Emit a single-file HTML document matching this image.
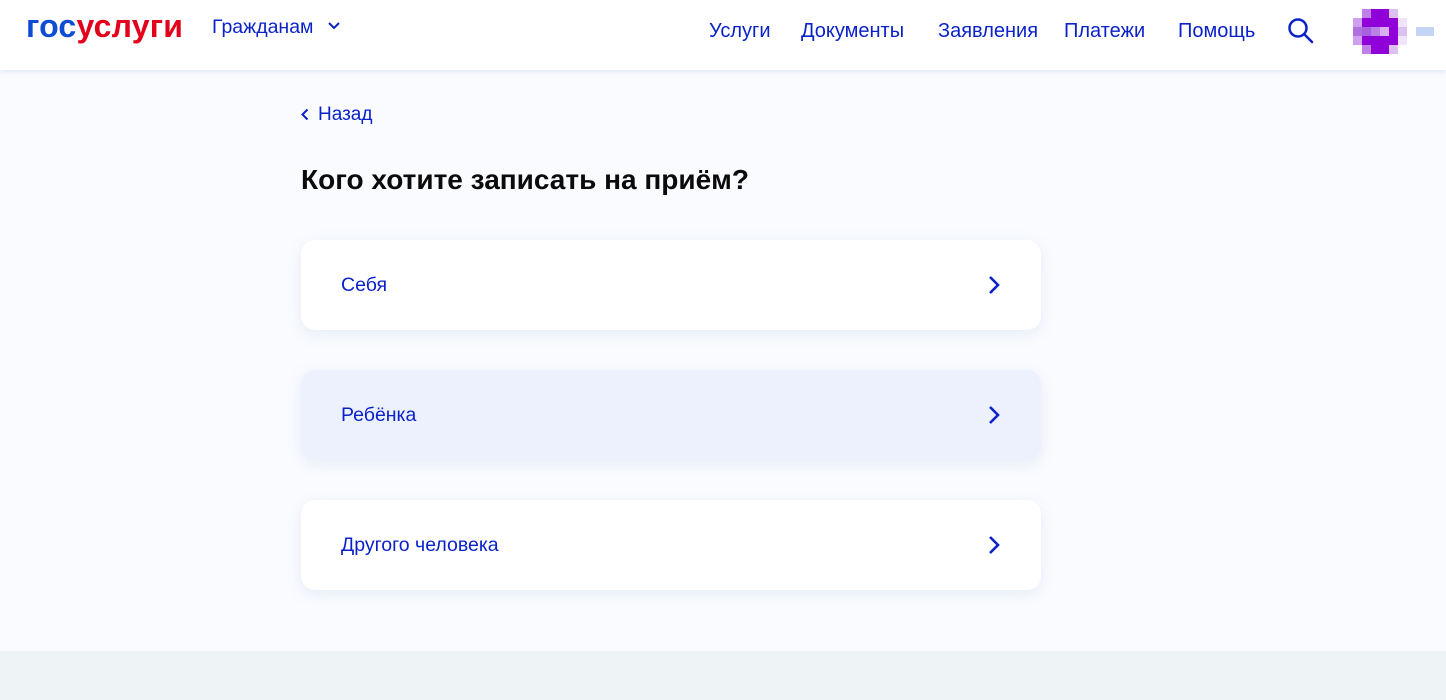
<!DOCTYPE html>
<html><head><meta charset="utf-8"><style>
*{margin:0;padding:0;box-sizing:border-box}
body{width:1446px;height:700px;overflow:hidden;background:#f9fbfe;font-family:"Liberation Sans",sans-serif;position:relative}
.hdr{position:absolute;left:0;top:0;width:1446px;height:70px;background:#fff;box-shadow:0 2px 4px rgba(200,210,235,.45)}
.logo{position:absolute;left:26px;top:8px;font-size:32px;font-weight:bold;letter-spacing:0.2px}
.logo .b{color:#0d4cd3}.logo .r{color:#e3001b}
.nav{position:absolute;top:20px;font-size:20px;color:#0b22c9}
.p{position:absolute;width:9px;height:9px}
.back{position:absolute;left:301px;top:104px;font-size:19px;color:#0b22c9}
h1{position:absolute;left:301px;top:164px;font-size:28px;font-weight:bold;color:#0b0b0b}
.card{position:absolute;left:301px;width:740px;height:90px;border-radius:14px;background:#fff;box-shadow:0 4px 14px rgba(210,220,240,.45)}
.card span{position:absolute;left:40px;top:34px;font-size:19.5px;color:#0b22c9}
.card svg{position:absolute;left:686px;top:35px}
.foot{position:absolute;left:0;top:651px;width:1446px;height:49px;background:#eef4f6}
</style></head><body>
<div class="hdr">
<div class="logo"><span class="b">гос</span><span class="r">услуги</span></div>
<div class="nav" style="left:212px;top:16px;font-size:19.5px">Гражданам</div>
<svg style="position:absolute;left:328px;top:21px" width="12" height="10" viewBox="0 0 12 10"><path d="M1 2l5 5 5-5" fill="none" stroke="#0b22c9" stroke-width="2"/></svg>
<div class="nav" style="left:709px">Услуги</div>
<div class="nav" style="left:801px">Документы</div>
<div class="nav" style="left:938px">Заявления</div>
<div class="nav" style="left:1064px">Платежи</div>
<div class="nav" style="left:1178px">Помощь</div>
<svg style="position:absolute;left:1287px;top:17px" width="30" height="28" viewBox="0 0 30 28"><circle cx="11" cy="11" r="8.5" fill="none" stroke="#0b22c9" stroke-width="2.5"/><path d="M17 17l8 8" stroke="#0b22c9" stroke-width="2.5" stroke-linecap="round"/></svg>
<div class="p" style="left:1362px;top:9px;background:#c080e8"></div><div class="p" style="left:1371px;top:9px;background:#9000d8"></div><div class="p" style="left:1380px;top:9px;background:#9000d8"></div><div class="p" style="left:1389px;top:9px;background:#dcc0f2"></div>
<div class="p" style="left:1353px;top:18px;background:#d0a0f0"></div><div class="p" style="left:1362px;top:18px;background:#9000d8"></div><div class="p" style="left:1371px;top:18px;background:#9000d8"></div><div class="p" style="left:1380px;top:18px;background:#9000d8"></div><div class="p" style="left:1389px;top:18px;background:#9000d8"></div><div class="p" style="left:1398px;top:18px;background:#f0e4fa"></div>
<div class="p" style="left:1353px;top:27px;background:#b070e0"></div><div class="p" style="left:1362px;top:27px;background:#a860e0"></div><div class="p" style="left:1371px;top:27px;background:#b880e8"></div><div class="p" style="left:1380px;top:27px;background:#d8b0f0"></div><div class="p" style="left:1389px;top:27px;background:#9000d8"></div><div class="p" style="left:1398px;top:27px;background:#dcc0f2"></div>
<div class="p" style="left:1353px;top:36px;background:#d0a0f0"></div><div class="p" style="left:1362px;top:36px;background:#9000d8"></div><div class="p" style="left:1371px;top:36px;background:#9000d8"></div><div class="p" style="left:1380px;top:36px;background:#9000d8"></div><div class="p" style="left:1389px;top:36px;background:#9000d8"></div><div class="p" style="left:1398px;top:36px;background:#f0e4fa"></div>
<div class="p" style="left:1362px;top:45px;background:#c080e8"></div><div class="p" style="left:1371px;top:45px;background:#9000d8"></div><div class="p" style="left:1380px;top:45px;background:#9000d8"></div><div class="p" style="left:1389px;top:45px;background:#dcc0f2"></div>
<div style="position:absolute;left:1416px;top:27px;width:18px;height:9px;background:#c4d4f4"></div>
</div>
<svg style="position:absolute;left:301px;top:108px" width="8" height="13" viewBox="0 0 8 13"><path d="M6.5 1.5l-5 5 5 5" fill="none" stroke="#0b22c9" stroke-width="2"/></svg>
<div class="back" style="left:318px">Назад</div>
<h1>Кого хотите записать на приём?</h1>
<div class="card" style="top:240px"><span>Себя</span><svg width="14" height="20" viewBox="0 0 14 20"><path d="M3 2l8 8-8 8" fill="none" stroke="#0b22c9" stroke-width="2.6"/></svg></div>
<div class="card" style="top:370px;background:#ecf1fd"><span>Ребёнка</span><svg width="14" height="20" viewBox="0 0 14 20"><path d="M3 2l8 8-8 8" fill="none" stroke="#0b22c9" stroke-width="2.6"/></svg></div>
<div class="card" style="top:500px"><span>Другого человека</span><svg width="14" height="20" viewBox="0 0 14 20"><path d="M3 2l8 8-8 8" fill="none" stroke="#0b22c9" stroke-width="2.6"/></svg></div>
<div class="foot"></div>
</body></html>
